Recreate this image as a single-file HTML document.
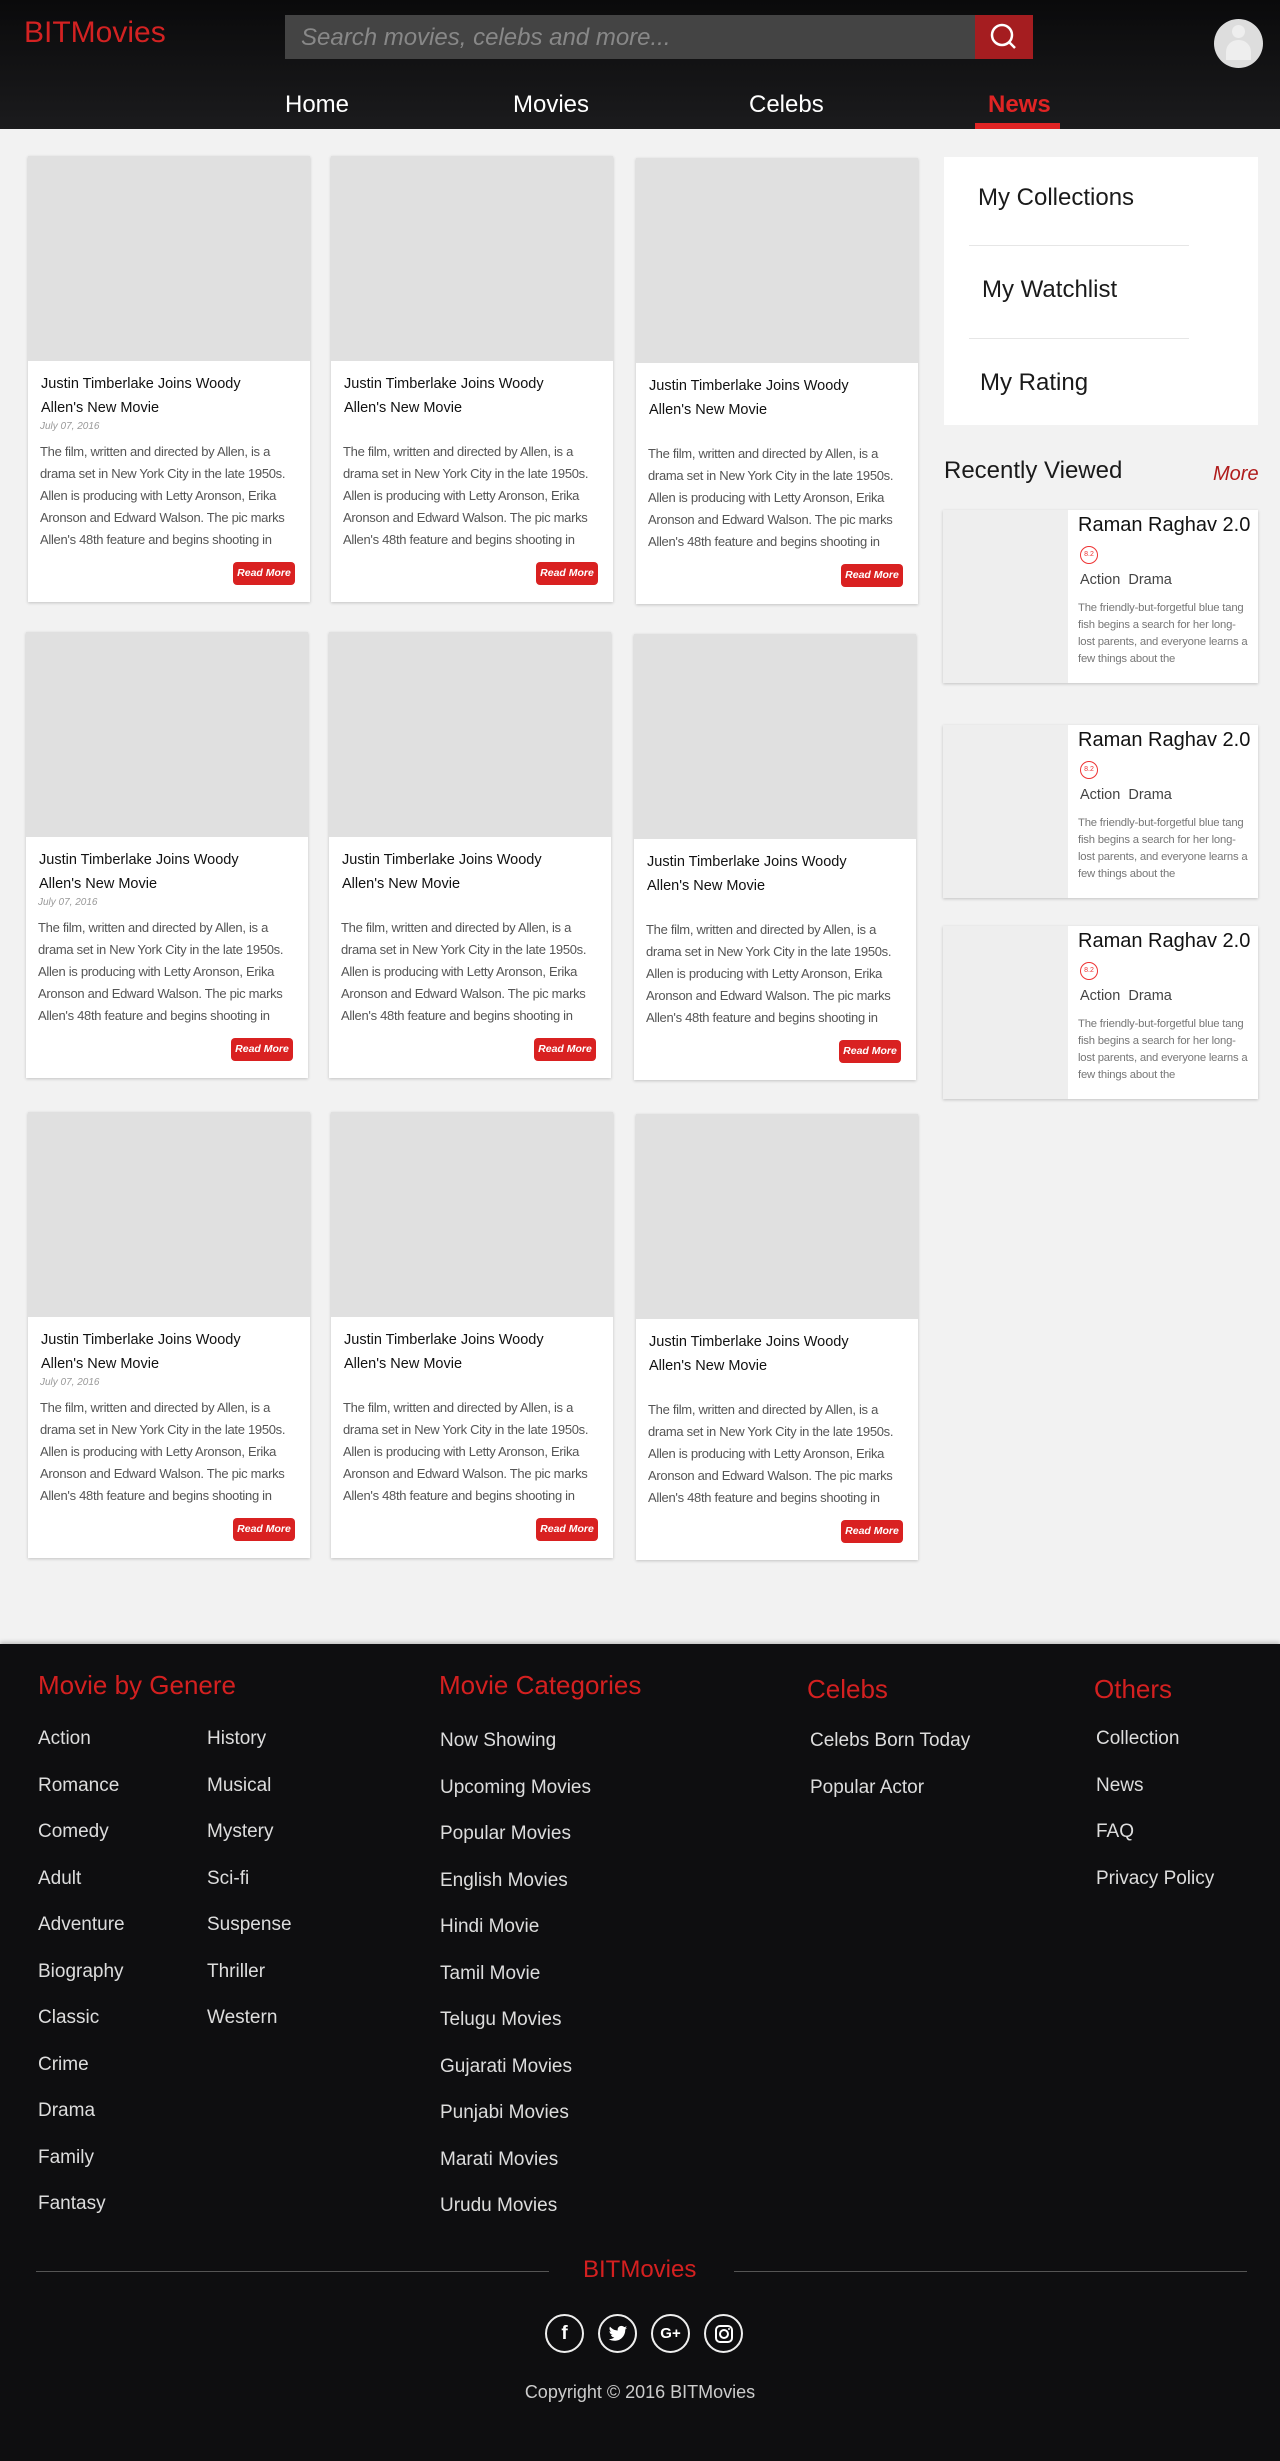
<!DOCTYPE html>
<html><head><meta charset="utf-8"><style>
*{margin:0;padding:0;box-sizing:border-box}
body{width:1280px;height:2461px;background:#f2f2f2;font-family:"Liberation Sans",Arial,sans-serif;position:relative;overflow:hidden}
.a{position:absolute}
header{position:absolute;left:0;top:0;width:1280px;height:129px;background:linear-gradient(#0a0a0b,#1b1b1d)}
.logo{left:24px;top:16px;color:#d32222;font-size:30px}
.search{left:285px;top:15px;width:690px;height:44px;background:#444;color:#888;font-style:italic;font-size:24px;padding:9px 16px;white-space:nowrap}
.sbtn{left:975px;top:15px;width:58px;height:44px;background:#a51d20}
.nav{top:91px;color:#fff;font-size:24px}
.card{position:absolute;width:282px;height:446px;background:#fff;box-shadow:0 1px 3px rgba(0,0,0,.2)}
.card .img{height:205px;background:#e0e0e0}
.card .t{position:absolute;left:13px;top:11px;width:230px;font-size:14.5px;line-height:24px;color:#111}
.card .d{position:absolute;left:12px;top:60px;font-size:10px;font-style:italic;color:#999}
.card .b{position:absolute;left:12px;top:80px;width:262px;font-size:13px;letter-spacing:-0.3px;line-height:22px;color:#555;height:110px;overflow:hidden}
.card .r{position:absolute;right:15px;top:406px;width:62px;height:23px;background:#d92121;border-radius:4px;color:#fff;font-size:10.5px;font-weight:bold;font-style:italic;text-align:center;line-height:23px}
.side{left:944px;top:157px;width:314px;height:268px;background:#fff}
.si{font-size:24px;color:#1a1a1a;left:34px}
.sep{left:25px;width:220px;height:1px;background:#e6e6e6}
.rv{position:absolute;left:943px;width:315px;height:173px;background:#fff;box-shadow:0 1px 3px rgba(0,0,0,.2)}
.rv .im{position:absolute;left:0;top:0;width:125px;height:173px;background:#eee}
.rv .tt{position:absolute;left:135px;top:4px;font-size:20px;color:#111}
.rv .rt{position:absolute;left:137px;top:36px;width:18px;height:18px;border:1.5px solid #e33;border-radius:50%;font-size:7px;color:#e33;text-align:center;line-height:15px}
.rv .g{position:absolute;left:137px;top:62px;font-size:14.5px;color:#444}
.rv .ds{position:absolute;left:135px;top:90px;width:172px;font-size:11.3px;letter-spacing:-0.2px;line-height:17px;color:#777;height:68px;overflow:hidden}
footer{position:absolute;left:0;top:1644px;width:1280px;height:817px;background:#0e0e10;box-shadow:0 -2px 4px rgba(0,0,0,.2)}
.fh{color:#d42020;font-size:26px;top:26px}
.fl{color:#ddd;font-size:19px}
.ic{position:absolute;top:2314px;width:39px;height:39px;border:2px solid #eee;border-radius:50%;color:#fff;text-align:center;font-weight:bold;font-size:19px;line-height:35px}
</style></head><body>
<header>
<div class="a logo">BITMovies</div>
<div class="a search">Search movies, celebs and more...</div>
<div class="a sbtn"><svg width="58" height="44"><circle cx="27" cy="20" r="10" fill="none" stroke="#fff" stroke-width="2.5"/><line x1="34" y1="27" x2="40" y2="33" stroke="#fff" stroke-width="2.5"/></svg></div>
<div class="a" style="left:1214px;top:19px;width:49px;height:49px;border-radius:50%;background:#ddd;overflow:hidden"><div class="a" style="left:18px;top:6px;width:13px;height:13px;border-radius:50%;background:#eee"></div><div class="a" style="left:12px;top:21px;width:25px;height:20px;border-radius:12px 12px 0 0;background:#eee"></div></div>
<div class="a nav" style="left:285px">Home</div>
<div class="a nav" style="left:513px">Movies</div>
<div class="a nav" style="left:749px">Celebs</div>
<div class="a nav" style="left:988px;color:#e02424;font-weight:bold">News</div>
<div class="a" style="left:975px;top:123px;width:85px;height:6px;background:#e02424"></div>
</header>

<div class="card" style="left:28px;top:156px"><div class="img"></div><div class="a" style="top:205px;left:0;right:0"><div class="t">Justin Timberlake Joins Woody Allen's New Movie</div><div class="d">July 07, 2016</div><div class="b">The film, written and directed by Allen, is a drama set in New York City in the late 1950s. Allen is producing with Letty Aronson, Erika Aronson and Edward Walson. The pic marks Allen's 48th feature and begins shooting in</div></div><div class="r">Read More</div></div>
<div class="card" style="left:331px;top:156px"><div class="img"></div><div class="a" style="top:205px;left:0;right:0"><div class="t">Justin Timberlake Joins Woody Allen's New Movie</div><div class="b">The film, written and directed by Allen, is a drama set in New York City in the late 1950s. Allen is producing with Letty Aronson, Erika Aronson and Edward Walson. The pic marks Allen's 48th feature and begins shooting in</div></div><div class="r">Read More</div></div>
<div class="card" style="left:636px;top:158px"><div class="img"></div><div class="a" style="top:205px;left:0;right:0"><div class="t">Justin Timberlake Joins Woody Allen's New Movie</div><div class="b">The film, written and directed by Allen, is a drama set in New York City in the late 1950s. Allen is producing with Letty Aronson, Erika Aronson and Edward Walson. The pic marks Allen's 48th feature and begins shooting in</div></div><div class="r">Read More</div></div>

<div class="card" style="left:26px;top:632px"><div class="img"></div><div class="a" style="top:205px;left:0;right:0"><div class="t">Justin Timberlake Joins Woody Allen's New Movie</div><div class="d">July 07, 2016</div><div class="b">The film, written and directed by Allen, is a drama set in New York City in the late 1950s. Allen is producing with Letty Aronson, Erika Aronson and Edward Walson. The pic marks Allen's 48th feature and begins shooting in</div></div><div class="r">Read More</div></div>
<div class="card" style="left:329px;top:632px"><div class="img"></div><div class="a" style="top:205px;left:0;right:0"><div class="t">Justin Timberlake Joins Woody Allen's New Movie</div><div class="b">The film, written and directed by Allen, is a drama set in New York City in the late 1950s. Allen is producing with Letty Aronson, Erika Aronson and Edward Walson. The pic marks Allen's 48th feature and begins shooting in</div></div><div class="r">Read More</div></div>
<div class="card" style="left:634px;top:634px"><div class="img"></div><div class="a" style="top:205px;left:0;right:0"><div class="t">Justin Timberlake Joins Woody Allen's New Movie</div><div class="b">The film, written and directed by Allen, is a drama set in New York City in the late 1950s. Allen is producing with Letty Aronson, Erika Aronson and Edward Walson. The pic marks Allen's 48th feature and begins shooting in</div></div><div class="r">Read More</div></div>

<div class="card" style="left:28px;top:1112px"><div class="img"></div><div class="a" style="top:205px;left:0;right:0"><div class="t">Justin Timberlake Joins Woody Allen's New Movie</div><div class="d">July 07, 2016</div><div class="b">The film, written and directed by Allen, is a drama set in New York City in the late 1950s. Allen is producing with Letty Aronson, Erika Aronson and Edward Walson. The pic marks Allen's 48th feature and begins shooting in</div></div><div class="r">Read More</div></div>
<div class="card" style="left:331px;top:1112px"><div class="img"></div><div class="a" style="top:205px;left:0;right:0"><div class="t">Justin Timberlake Joins Woody Allen's New Movie</div><div class="b">The film, written and directed by Allen, is a drama set in New York City in the late 1950s. Allen is producing with Letty Aronson, Erika Aronson and Edward Walson. The pic marks Allen's 48th feature and begins shooting in</div></div><div class="r">Read More</div></div>
<div class="card" style="left:636px;top:1114px"><div class="img"></div><div class="a" style="top:205px;left:0;right:0"><div class="t">Justin Timberlake Joins Woody Allen's New Movie</div><div class="b">The film, written and directed by Allen, is a drama set in New York City in the late 1950s. Allen is producing with Letty Aronson, Erika Aronson and Edward Walson. The pic marks Allen's 48th feature and begins shooting in</div></div><div class="r">Read More</div></div>

<div class="a side">
<div class="a si" style="top:27px;left:34px">My Collections</div>
<div class="a sep" style="top:88px"></div>
<div class="a si" style="top:119px;left:38px">My Watchlist</div>
<div class="a sep" style="top:181px"></div>
<div class="a si" style="top:212px;left:36px">My Rating</div>
</div>
<div class="a" style="left:944px;top:457px;font-size:24px;color:#1a1a1a">Recently Viewed</div>
<div class="a" style="left:1213px;top:463px;font-size:20px;color:#b01c1c;font-style:italic">More</div>

<div class="rv" style="top:510px"><div class="im"></div><div class="tt">Raman Raghav 2.0</div><div class="rt">8.2</div><div class="g">Action&nbsp; Drama</div><div class="ds">The friendly-but-forgetful blue tang fish begins a search for her long-lost parents, and everyone learns a few things about the</div></div>
<div class="rv" style="top:725px"><div class="im"></div><div class="tt">Raman Raghav 2.0</div><div class="rt">8.2</div><div class="g">Action&nbsp; Drama</div><div class="ds">The friendly-but-forgetful blue tang fish begins a search for her long-lost parents, and everyone learns a few things about the</div></div>
<div class="rv" style="top:926px"><div class="im"></div><div class="tt">Raman Raghav 2.0</div><div class="rt">8.2</div><div class="g">Action&nbsp; Drama</div><div class="ds">The friendly-but-forgetful blue tang fish begins a search for her long-lost parents, and everyone learns a few things about the</div></div>

<footer>
<div class="a fh" style="left:38px">Movie by Genere</div>
<div class="a fh" style="left:439px">Movie Categories</div>
<div class="a fh" style="left:807px;top:30px">Celebs</div>
<div class="a fh" style="left:1094px;top:30px">Others</div>
<div class="a fl" style="left:38px;top:72px;line-height:46.5px">Action<br>Romance<br>Comedy<br>Adult<br>Adventure<br>Biography<br>Classic<br>Crime<br>Drama<br>Family<br>Fantasy</div>
<div class="a fl" style="left:207px;top:72px;line-height:46.5px">History<br>Musical<br>Mystery<br>Sci-fi<br>Suspense<br>Thriller<br>Western</div>
<div class="a fl" style="left:440px;top:74px;line-height:46.5px">Now Showing<br>Upcoming Movies<br>Popular Movies<br>English Movies<br>Hindi Movie<br>Tamil Movie<br>Telugu Movies<br>Gujarati Movies<br>Punjabi Movies<br>Marati Movies<br>Urudu Movies</div>
<div class="a fl" style="left:810px;top:74px;line-height:46.5px">Celebs Born Today<br>Popular Actor</div>
<div class="a fl" style="left:1096px;top:72px;line-height:46.5px">Collection<br>News<br>FAQ<br>Privacy Policy</div>
<div class="a" style="left:36px;top:627px;width:513px;height:1px;background:#555"></div>
<div class="a" style="left:734px;top:627px;width:513px;height:1px;background:#555"></div>
<div class="a" style="left:583px;top:612px;color:#d42020;font-size:24px">BITMovies</div>
<div class="a" style="left:0;top:738px;width:1280px;text-align:center;color:#ccc;font-size:18px">Copyright © 2016 BITMovies</div>
</footer>
<div class="ic" style="left:545px">f</div>
<div class="ic" style="left:598px"><svg width="20" height="18" style="margin-top:9px" viewBox="0 0 24 20"><path d="M23 2.5c-.8.4-1.7.6-2.6.7.9-.6 1.6-1.4 2-2.5-.9.5-1.9.9-2.9 1.1C18.6.9 17.4.3 16.1.3c-2.5 0-4.5 2-4.5 4.5 0 .4 0 .7.1 1C7.9 5.6 4.6 3.8 2.4 1.1c-.4.7-.6 1.4-.6 2.3 0 1.6.8 2.9 2 3.7-.7 0-1.4-.2-2-.6v.1c0 2.2 1.6 4 3.6 4.4-.4.1-.8.2-1.2.2-.3 0-.6 0-.8-.1.6 1.8 2.2 3.1 4.2 3.1-1.5 1.2-3.5 1.9-5.6 1.9H1c2 1.3 4.4 2 6.9 2 8.3 0 12.8-6.9 12.8-12.8v-.6c.9-.6 1.7-1.4 2.3-2.3z" fill="#fff"/></svg></div>
<div class="ic" style="left:651px;font-size:15px">G+</div>
<div class="ic" style="left:704px"><svg width="20" height="20" style="margin-top:8px" viewBox="0 0 20 20"><rect x="2" y="2" width="16" height="16" rx="4" fill="none" stroke="#fff" stroke-width="2"/><circle cx="10" cy="10" r="4" fill="none" stroke="#fff" stroke-width="2"/><circle cx="15" cy="5" r="1" fill="#fff"/></svg></div>
</body></html>
